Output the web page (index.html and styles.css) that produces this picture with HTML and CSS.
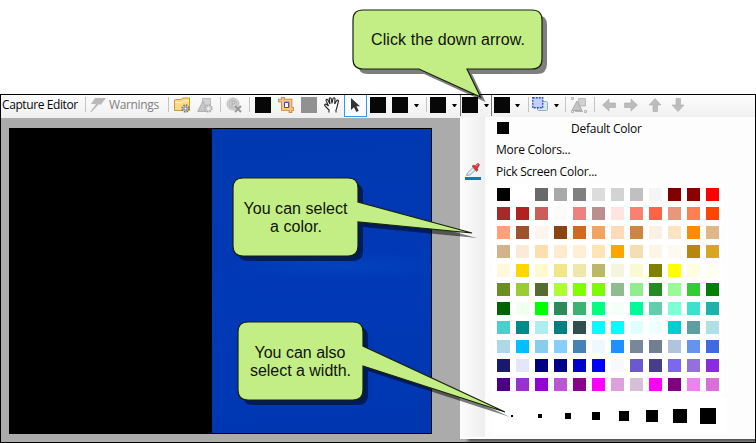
FILE: index.html
```html
<!DOCTYPE html>
<html lang="en">
<head>
<meta charset="utf-8">
<title>Capture Editor</title>
<link rel="stylesheet" href="styles.css">
</head>
<body>
<main class="window">
  <header class="toolbar">
    <span class="label title">Capture Editor</span>
    <i class="sep g5"></i>
    <svg class="icon g4" viewBox="0 0 16 16"><path d="M5 1H16L10.500 8L9 7L1 15.500L.5 14.500L6 7H1Z" fill="#b9b9b9"/></svg>
    <span class="label warnings">Warnings</span>
    <i class="sep g7"></i>
    <svg class="icon g5" viewBox="0 0 16 16"><path d="M.5 3L1.500 2.500H7L8.500 1H15.500V13.500H.5Z" fill="#f7d98a" stroke="#c9963a"/><path d="M1 5.500H8L9.500 4H15" fill="none" stroke="#fff1be"/><circle cx="11.500" cy="11.500" r="3.200" fill="#ddd" stroke="#777" stroke-width="2" stroke-dasharray="1.500 1"/><circle cx="11.500" cy="11.500" r="1.500" fill="#fff" stroke="#777"/></svg>
    <svg class="icon g7" viewBox="0 0 16 16"><path d="M5.500 1.500H13.500V12H5Z" fill="#d2d2d2" stroke="#bcbcbc"/><path d="M6 4L11 14.500H.7Z" fill="#c6c6c6" stroke="#b0b0b0"/><circle cx="11.500" cy="11.500" r="3.200" fill="#ddd" stroke="#aaa" stroke-width="2" stroke-dasharray="1.500 1"/><circle cx="11.500" cy="11.500" r="1.300" fill="#eee"/></svg>
    <i class="sep g7"></i>
    <svg class="icon g5" viewBox="0 0 16 16"><circle cx="7" cy="7" r="6" fill="#d2d2d2" stroke="#c0c0c0"/><circle cx="7" cy="7" r="4" fill="none" stroke="#bbb"/><path d="M6 10V4H8Q10 5.500 8 7H6" fill="none" stroke="#b0b0b0"/><path d="M9 9L15 15M15 9L9 15" stroke="#999" stroke-width="2"/></svg>
    <i class="sep g7"></i>
    <i class="block g5"></i>
    <svg class="icon g7" viewBox="0 0 16 16"><path d="M5 0V12H16M0 3.500H12.500V16" fill="none" stroke="#c77936" stroke-width="3.600"/><path d="M5 .7V12H15.300M.7 3.500H12.500V15.300" fill="none" stroke="#fac67e" stroke-width="2"/><path d="M6.500 5.500H10.500V10.500H6.500Z" fill="#f8f8fc" stroke="#3157c5"/></svg>
    <i class="block muted g7"></i>
    <svg class="icon g7" viewBox="0 0 16 16"><path d="M5 15.500V13L1 9Q0 7 2 7L4.500 9L2 3.500Q2 1.800 3.600 2.500L6 7L5.300 1.500Q6 0 7.200 1.500L8 6.500L9 1.500Q10.300 0 11 1.700L10.700 7L12.700 3.500Q14 2.500 14.500 4L13 10L12 13V15.500" fill="#fff" stroke="#222" stroke-width="1.100"/></svg>
    <span class="pointer"><svg class="icon" viewBox="0 0 16 16"><path d="M4 1V13L7 10.300L9.500 15L11.700 13.700L9.400 9.300H13Z" fill="#333"/></svg></span>
    <i class="block g3"></i>
    <i class="block g6"></i>
    <i class="caret g6"></i>
    <i class="sep g7"></i>
    <i class="block g3"></i>
    <i class="caret g6"></i>
    <i class="edge g3"></i>
    <i class="block g1"></i>
    <i class="caret g6"></i>
    <i class="edge g2"></i>
    <i class="block g2"></i>
    <i class="caret g5"></i>
    <i class="sep g8"></i>
    <svg class="icon g3" viewBox="0 0 16 16"><rect x="5.500" y="4.500" width="10" height="9" rx="1" fill="#d7e8e9" stroke="#91b0b8"/><rect x=".75" y=".75" width="10" height="10" fill="#bfd0fb" stroke="#314fc4" stroke-width="1.300" stroke-dasharray="2 1"/></svg>
    <i class="caret g6"></i>
    <i class="sep g6"></i>
    <svg class="icon g5" viewBox="0 0 16 16"><path d="M7.500 1.500H14.500V9H8Z" fill="#d0d0d0" stroke="#bbb"/><path d="M6 4L11 13.500H1Z" fill="#c4c4c4" stroke="#aaa"/><path d="M.5 .5H2.500V2.500H.5ZM.5 13.500H2.500V15.500H.5ZM13.500 13.500H15.500V15.500H13.500Z" fill="#eee" stroke="#aaa" stroke-width=".8"/><path d="M4 14.500H12" stroke="#b5b5b5"/></svg>
    <i class="sep g7"></i>
    <svg class="nav g7" viewBox="0 0 14 14"><path d="M.5 7L7 1V5H13.500V9.500H7V13Z"/></svg>
    <svg class="nav g8" viewBox="0 0 14 14"><path d="M13.500 7L7 1V5H.5V9.500H7V13Z"/></svg>
    <svg class="nav g10" viewBox="0 0 14 14"><path d="M7 .5L13 7H9.500V13.500H5V7H1Z"/></svg>
    <svg class="nav g9" viewBox="0 0 14 14"><path d="M7 13.500L13 7H9.500V.5H5V7H1Z"/></svg>
  </header>
  <div class="workspace">
    <section class="canvas"><div class="desktop"></div></section>
    <aside class="menu">
      <div class="gutter">
        <svg class="dropper" viewBox="0 0 16 17"><path d="M1.500 12.500L2.500 10L8 4.500L10.500 7L5 12Z" fill="#dfeaf5" stroke="#8094a5" stroke-width=".8"/><path d="M7 3L9 2L10 3L12 .8Q14 0 14.500 2L12.500 5.500L13 7L11.500 8.500Z" fill="#d93636" stroke="#a32929" stroke-width=".5"/><path d="M11 3L13 1.500" stroke="#ff9c90"/><path d="M0 14H16V17H0Z" fill="#087db7"/></svg>
      </div>
      <div class="options">
        <div class="row default"><i class="chip"></i><span class="label">Default Color</span></div>
        <div class="row label more">More Colors...</div>
        <div class="row label pick">Pick Screen Color...</div>
        <div class="palette" id="palette"></div>
        <div class="widths" id="widths"></div>
      </div>
    </aside>
  </div>
</main>
<svg class="callouts" viewBox="0 0 756 443">
  <defs>
    <path id="c1" d="M363 10H532Q542 10 542 20V59Q542 69 532 69H467L480.500 97L419 69H363Q353 69 353 59V20Q353 10 363 10Z"/>
    <path id="c2" d="M243 178H348Q358 178 358 188V202L472 233L358 222V246Q358 256 348 256H243Q233 256 233 246V188Q233 178 243 178Z"/>
    <path id="c3" d="M248 322H353Q363 322 363 332V346L505 412L363 366V390Q363 400 353 400H248Q238 400 238 390V332Q238 322 248 322Z"/>
  </defs>
  <g class="shadow"><use href="#c1"/><use href="#c2"/><use href="#c3"/></g>
  <g class="bubble"><use href="#c1"/><use href="#c2"/><use href="#c3"/></g>
  <g class="caption">
    <text x="371" y="45" textLength="154">Click the down arrow.</text>
    <text x="243.500" y="214" textLength="104">You can select</text>
    <text x="270" y="232" textLength="52">a color.</text>
    <text x="254.500" y="358" textLength="91">You can also</text>
    <text x="250" y="376" textLength="101">select a width.</text>
  </g>
</svg>
<script src="palette.js"></script>
</body>
</html>
```
FILE: styles.css
```css
* { box-sizing: border-box; }
body { margin: 0; width: 756px; height: 443px; overflow: hidden; background: #fff; padding-top: 94px; }
.window { height: 349px; border: 1px solid #000; background: #ababab; display: flex; flex-direction: column; }
.toolbar { height: 23px; flex: none; display: flex; align-items: flex-start; background: linear-gradient(#fcfcfc, #f0f0f0); padding: 2px 0 0 1px; }
.toolbar > * { flex: none; }
.label { font: 12px/16px "Open Sans", "Noto Sans", sans-serif; letter-spacing: -.25px; color: #080808; white-space: nowrap; }
.title { width: 78px; letter-spacing: -.4px; }
.warnings { width: 52px; margin-left: 3px; color: #808080; letter-spacing: -.35px; }
.icon { display: block; width: 16px; height: 16px; }
.sep { width: 1px; height: 15px; background: #c4c4c4; }
.block { width: 16px; height: 16px; background: #070707; }
.block.muted { background: #919191; }
.pointer { width: 23px; height: 22px; margin: -2px 0 0 4px; padding: 2px 2px; border: solid #3399e8; border-width: 0 1px 1px; background: #f8fbff; }
.caret { width: 5px; height: 3px; margin-top: 7px; background: #000; clip-path: polygon(0 0, 100% 0, 60% 100%, 40% 100%); }
.edge { width: 1px; height: 21px; margin-top: -2px; background: #777; }
.nav { width: 14px; height: 14px; margin-top: 1px; fill: #bcbcbc; stroke: #ababab; stroke-width: .6; }
.g1 { margin-left: 1px; }
.g2 { margin-left: 2px; }
.g3 { margin-left: 3px; }
.g4 { margin-left: 4px; }
.g5 { margin-left: 5px; }
.g6 { margin-left: 6px; }
.g7 { margin-left: 7px; }
.g8 { margin-left: 8px; }
.g9 { margin-left: 9px; }
.g10 { margin-left: 10px; }
.workspace { flex: 1; min-height: 0; display: flex; padding-left: 8px; }
.canvas { flex: none; width: 423px; height: 306px; margin: 10px 28px 0 0; background: #000; padding: 1px 1px 1px 203px; }
.desktop { height: 304px; background: radial-gradient(ellipse 120px 14px at 60% 45%, rgba(8, 72, 196, .6), transparent), linear-gradient(175deg, #0038b0, #0039b6 55%, #0036b0); }
.menu { flex: none; width: 295px; height: 322px; margin-top: -1px; display: flex; background: #fdfdfd; box-shadow: 8px 3px 3px #555; clip-path: inset(0 0 -3px); }
.gutter { width: 25px; height: 320px; padding: 46px 0 0 5px; background: linear-gradient(90deg, #fcfcfc, #eee); }
.dropper { display: block; width: 16px; height: 17px; }
.options { flex: 1; padding-left: 8px; }
.row { height: 22px; }
.default { display: flex; padding: 5px 0 0 4px; height: 25px; }
.default .label { margin: -1px 0 0 62px; }
.chip { width: 12px; height: 12px; background: #000; }
.more, .pick { padding-left: 3px; }
.more { height: 22px; }
.pick { height: 20px; }
.palette { width: 230px; height: 210px; padding: 4px; display: grid; grid-template-columns: repeat(12, 13px); grid-auto-rows: 13px; gap: 6px; background: #fff; }
.widths { width: 234px; height: 38px; margin-top: 3px; padding-left: 5px; display: grid; grid-template-columns: repeat(8, 28px); place-items: center; background: #fff; }
.widths i { background: #000; }
.callouts { position: absolute; left: 0; top: 0; width: 756px; height: 443px; }
.shadow { fill: #000; opacity: .5; transform: translate(5px, 5px); }
.bubble { fill: #c3ee85; stroke: #18230c; stroke-width: 1.2; }
.caption { font: 16px "Liberation Sans", Arial, sans-serif; fill: #10130c; }
```
FILE: palette.js
```js
const rows = [
  "black white dimgray darkgray gray gainsboro lightgray silver whitesmoke maroon darkred red",
  "brown firebrick indianred snow lightcoral rosybrown mistyrose salmon tomato darksalmon coral orangered",
  "lightsalmon sienna seashell saddlebrown chocolate sandybrown peachpuff peru linen bisque darkorange burlywood",
  "tan antiquewhite navajowhite blanchedalmond papayawhip moccasin orange wheat oldlace floralwhite darkgoldenrod goldenrod",
  "cornsilk gold lemonchiffon khaki palegoldenrod darkkhaki beige lightgoldenrodyellow olive yellow lightyellow ivory",
  "olivedrab yellowgreen darkolivegreen greenyellow chartreuse lawngreen darkseagreen lightgreen forestgreen palegreen limegreen green",
  "darkgreen honeydew lime seagreen mediumseagreen springgreen mintcream mediumspringgreen mediumaquamarine aquamarine turquoise lightseagreen",
  "mediumturquoise darkcyan paleturquoise teal darkslategray cyan aqua lightcyan azure darkturquoise cadetblue powderblue",
  "lightblue deepskyblue skyblue lightskyblue steelblue aliceblue dodgerblue lightslategray slategray lightsteelblue cornflowerblue royalblue",
  "midnightblue lavender navy darkblue mediumblue blue ghostwhite slateblue darkslateblue mediumslateblue mediumpurple blueviolet",
  "indigo darkorchid darkviolet mediumorchid darkmagenta magenta plum thistle fuchsia purple violet orchid"
];
const palette = document.getElementById("palette");
rows.join(" ").split(" ").forEach(color => {
  const swatch = document.createElement("i");
  swatch.style.background = color;
  palette.append(swatch);
});
const widths = document.getElementById("widths");
[2, 4, 6, 8, 10, 12, 14, 16].forEach(size => {
  const mark = document.createElement("i");
  mark.style.width = mark.style.height = size + "px";
  widths.append(mark);
});
```
